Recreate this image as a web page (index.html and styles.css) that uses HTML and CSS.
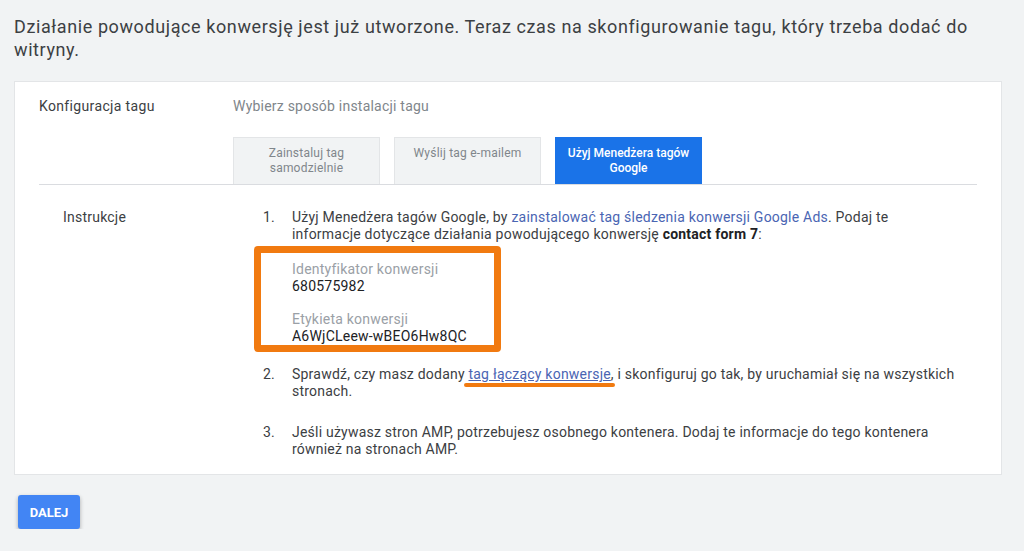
FILE: index.html
```html
<!DOCTYPE html>
<html lang="pl">
  <head>
    <meta charset="UTF-8" />
    <title>Konfiguracja tagu</title>
    <link rel="stylesheet" href="styles.css">
  </head>
  <body>
    <p class="intro">Działanie powodujące konwersję jest już utworzone. Teraz czas na skonfigurowanie tagu, który trzeba dodać do witryny.</p>

    <div class="card">
      <div class="setup">
        <div class="label">Konfiguracja tagu</div>
        <div class="setup-main">
          <div class="hint">Wybierz sposób instalacji tagu</div>
          <div class="tabs">
            <div class="tab">Zainstaluj tag<br>samodzielnie</div>
            <div class="tab">Wyślij tag e-mailem</div>
            <div class="tab active">Użyj Menedżera tagów<br>Google</div>
          </div>
        </div>
      </div>

      <div class="instructions">
        <div class="label">Instrukcje</div>
        <ol class="steps">
          <li>
            <span class="num">1.</span>
            <div class="step-body">
              <p>Użyj Menedżera tagów Google, by <a href="#">zainstalować tag śledzenia konwersji Google Ads</a>. Podaj te informacje dotyczące działania powodującego konwersję <b>contact form 7</b>:</p>
              <div class="details">
                <div class="field-name">Identyfikator konwersji</div>
                <div class="field-value">680575982</div>
                <div class="field-name second">Etykieta konwersji</div>
                <div class="field-value">A6WjCLeew-wBEO6Hw8QC</div>
              </div>
            </div>
          </li>
          <li>
            <span class="num">2.</span>
            <div class="step-body">
              <p>Sprawdź, czy masz dodany <a href="#" class="marked">tag łączący konwersje</a>, i skonfiguruj go tak, by uruchamiał się na wszystkich stronach.</p>
            </div>
          </li>
          <li>
            <span class="num">3.</span>
            <div class="step-body">
              <p>Jeśli używasz stron AMP, potrzebujesz osobnego kontenera. Dodaj te informacje do tego kontenera również na stronach AMP.</p>
            </div>
          </li>
        </ol>
      </div>
    </div>

    <button class="next">DALEJ</button>
  </body>
</html>
```

FILE: styles.css
```css
body {
  margin: 0;
  background: #f1f3f4;
  font-family: Roboto, "Noto Sans", sans-serif;
  color: #3c4043;
}

.intro {
  margin: 0;
  padding: 15px 40px 0 14px;
  font-size: 18px;
  line-height: 23px;
  letter-spacing: 0.6px;
  color: #3c4043;
}

.card {
  margin: 20px 22px 0 14px;
  background: #fff;
  border: 1px solid #e3e5e7;
  height: 392px;
  padding: 0 24px;
  letter-spacing: 0.22px;
}

.setup {
  display: flex;
  border-bottom: 1px solid #dadce0;
}

.label {
  width: 194px;
  flex-shrink: 0;
  font-size: 14px;
  color: #3c4043;
}

.setup .label {
  padding-top: 16px;
  letter-spacing: 0.35px;
}

.hint {
  padding-top: 16px;
  font-size: 14px;
  color: #80868b;
}

.tabs {
  display: flex;
  gap: 14px;
  margin-top: 23px;
}

.tab {
  width: 147px;
  height: 47px;
  box-sizing: border-box;
  padding-top: 8px;
  background: #f1f3f4;
  border: 1px solid #e3e5e7;
  border-bottom: none;
  text-align: center;
  font-size: 12px;
  line-height: 15px;
  color: #80868b;
}

.tab.active {
  background: #1a73e8;
  border-color: #1a73e8;
  color: #fff;
  font-weight: 500;
  letter-spacing: 0;
}

.instructions {
  display: flex;
  padding: 24px 0 0 24px;
}

.instructions .label {
  width: 200px;
  line-height: 17px;
}

.steps {
  list-style: none;
  margin: 0;
  padding: 0;
  font-size: 14px;
  line-height: 17px;
}

.steps li {
  display: flex;
  margin-bottom: 24px;
}

.steps li:first-child {
  margin-bottom: 14px;
}

.num {
  width: 29px;
  flex-shrink: 0;
}

.step-body {
  width: 666px;
}

.step-body p {
  margin: 0;
}

.steps a {
  color: #4a65b3;
  text-decoration: none;
}

.steps b {
  color: #202124;
  font-weight: 700;
}

.details {
  width: 184px;
  margin: 3px 0 0 -38px;
  padding: 8px 18px 0 31px;
  border: 7px solid #f17a10;
  border-radius: 4px;
  white-space: nowrap;
}

.field-name {
  color: #9aa0a6;
}

.field-name.second {
  margin-top: 16px;
}

.field-value {
  color: #202124;
}

.steps a.marked {
  position: relative;
  text-decoration: underline;
}

.steps a.marked::after {
  content: "";
  position: absolute;
  left: -4px;
  right: -4px;
  bottom: -5px;
  height: 4px;
  border-radius: 2px;
  background: #f17a10;
}

.next {
  margin: 20px 0 0 18px;
  width: 62px;
  height: 34px;
  border: none;
  border-radius: 3px;
  background: #4285f4;
  color: #fff;
  font-family: Roboto, sans-serif;
  font-size: 13px;
  font-weight: 700;
  box-shadow: 0 2px 4px rgba(0, 0, 0, 0.3);
}
```
